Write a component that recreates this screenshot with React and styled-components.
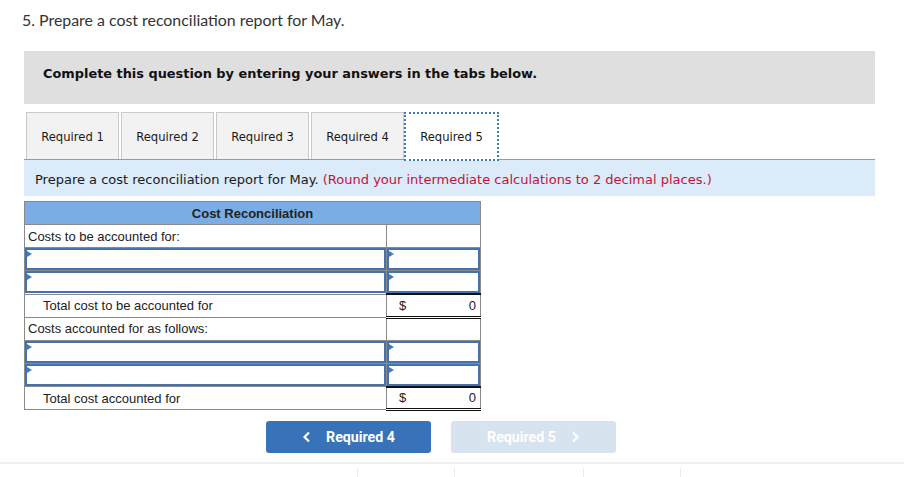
import React from "react";
import styled, { createGlobalStyle } from "styled-components";

const Global = createGlobalStyle`
  html, body { margin: 0; padding: 0; background: #fff; }
  body { width: 904px; height: 477px; overflow: hidden; }
  * { box-sizing: border-box; }
`;

const Page = styled.div`
  position: relative;
  width: 904px;
  height: 477px;
  padding-top: 10px;
`;

const Title = styled.div`
  font-family: Lato, "Open Sans", sans-serif;
  font-size: 15.9px;
  color: #333;
  line-height: 20px;
  padding-left: 22px;
  height: 41px;
`;

const Section = styled.div`
  margin-left: 24px;
  width: 851px;
`;

const Banner = styled.div`
  background: #dfdfdf;
  height: 53px;
  display: flex;
  align-items: center;
  padding: 0 0 8px 19px;
  font-family: "DejaVu Sans", Verdana, sans-serif;
  font-weight: bold;
  font-size: 12.9px;
  color: #111;
`;

const TabList = styled.div`
  display: flex;
  gap: 2px;
  margin-top: 8px;
  padding-left: 2px;
  height: 48px;
  border-bottom: 1px solid #9a9a9a;
`;

const Tab = styled.div`
  width: ${(p) => (p.$active ? "95px" : "93px")};
  height: ${(p) => (p.$active ? "49px" : "47px")};
  margin-left: ${(p) => (p.$active ? "-2px" : "0")};
  display: flex;
  align-items: center;
  justify-content: center;
  font-family: "DejaVu Sans", Verdana, sans-serif;
  font-size: 11.6px;
  color: #1a1a1a;
  background: ${(p) => (p.$active ? "#fff" : "#f2f2f2")};
  border: ${(p) => (p.$active ? "2px dotted #3f78bd" : "1px solid #c9c9c9")};
  border-bottom: ${(p) => (p.$active ? "2px dotted #3f78bd" : "none")};
  padding-top: ${(p) => (p.$active ? "0" : "1px")};
`;

const Instruction = styled.div`
  background: #dbebf9;
  height: 36px;
  display: flex;
  align-items: center;
  padding: 2px 0 0 11px;
  font-family: "DejaVu Sans", Verdana, sans-serif;
  font-size: 13px;
  color: #1a1a1a;
`;

const Red = styled.span`
  color: #c0143c;
`;

const Table = styled.table`
  margin-top: 5px;
  border-collapse: collapse;
  width: 457px;
  font-family: "Liberation Sans", Arial, sans-serif;
  font-size: 13px;
  color: #222;
  border: 1px solid #8a8a8a;
`;

const HeadCell = styled.th`
  background: #7aade4;
  height: 23px;
  font-weight: bold;
  font-size: 13px;
  text-align: center;
  padding: 0;
  border: 1px solid #8a8a8a;
`;

const LabelCell = styled.td`
  height: 23px;
  padding: 0 0 0 ${(p) => (p.$indent ? "18px" : "3px")};
  border: 1px solid #8a8a8a;
  width: 362px;
  vertical-align: middle;
`;

const BlankCell = styled.td`
  border: 1px solid #8a8a8a;
  padding: 0;
  height: 23px;
`;

const InputCell = styled.td`
  padding: 0;
  height: 23px;
  border: 1px solid #8a8a8a;
`;

const InputBox = styled.div`
  position: relative;
  height: 22px;
  border: 2px solid #4672ab;
  background: #fff;
  &::before {
    content: "";
    position: absolute;
    left: 0;
    top: 1px;
    border-left: 5px solid #3f7bc2;
    border-top: 3px solid transparent;
    border-bottom: 3px solid transparent;
  }
`;

const TotalCell = styled.td`
  padding: 0 4px 0 12px;
  height: 23px;
  border: 1px solid #8a8a8a;
  border-top: 2px solid #111;
  border-bottom: 3px double #111;
`;

const Amount = styled.div`
  display: flex;
  justify-content: space-between;
  align-items: center;
`;

const Nav = styled.div`
  display: flex;
  gap: 20px;
  margin-top: 10px;
  padding-left: 266px;
`;

const NavButton = styled.button`
  width: 165px;
  height: 32px;
  border: none;
  border-radius: 3px;
  background: ${(p) => (p.$disabled ? "#d8e3f0" : "#3873b9")};
  color: #fff;
  font-family: Roboto, "Liberation Sans", Arial, sans-serif;
  font-weight: 700;
  font-size: 14.2px;
  display: flex;
  align-items: center;
  justify-content: center;
  gap: 15px;
  padding: 0;
  cursor: ${(p) => (p.$disabled ? "default" : "pointer")};
`;

const Footer = styled.div`
  margin-top: 9px;
  border-top: 2px solid #efefef;
  display: flex;
  height: 16px;
  padding-top: 4px;
`;

const FooterCell = styled.div`
  width: ${(p) => p.$w}px;
  border-left: ${(p) => (p.$first ? "none" : "1px solid #ececec")};
`;

const Chevron = ({ dir }) => (
  <svg width="9" height="12" viewBox="0 0 9 12" aria-hidden="true">
    <path
      d={dir === "left" ? "M7 1.5 L2.5 6 L7 10.5" : "M2 1.5 L6.5 6 L2 10.5"}
      fill="none"
      stroke="#fff"
      strokeWidth="2.2"
    />
  </svg>
);

const InputRow = () => (
  <tr>
    <InputCell>
      <InputBox />
    </InputCell>
    <InputCell>
      <InputBox />
    </InputCell>
  </tr>
);

export default function App() {
  const tabs = ["Required 1", "Required 2", "Required 3", "Required 4", "Required 5"];
  return (
    <Page>
      <Global />
      <Title>5. Prepare a cost reconciliation report for May.</Title>
      <Section>
        <Banner>Complete this question by entering your answers in the tabs below.</Banner>
        <TabList>
          {tabs.map((t, i) => (
            <Tab key={t} $active={i === 4}>
              {t}
            </Tab>
          ))}
        </TabList>
        <Instruction>
          Prepare a cost reconciliation report for May.&nbsp;
          <Red>(Round your intermediate calculations to 2 decimal places.)</Red>
        </Instruction>
        <Table>
          <thead>
            <tr>
              <HeadCell colSpan={2}>Cost Reconciliation</HeadCell>
            </tr>
          </thead>
          <tbody>
            <tr>
              <LabelCell>Costs to be accounted for:</LabelCell>
              <BlankCell />
            </tr>
            <InputRow />
            <InputRow />
            <tr>
              <LabelCell $indent>Total cost to be accounted for</LabelCell>
              <TotalCell>
                <Amount>
                  <span>$</span>
                  <span>0</span>
                </Amount>
              </TotalCell>
            </tr>
            <tr>
              <LabelCell>Costs accounted for as follows:</LabelCell>
              <BlankCell />
            </tr>
            <InputRow />
            <InputRow />
            <tr>
              <LabelCell $indent>Total cost accounted for</LabelCell>
              <TotalCell>
                <Amount>
                  <span>$</span>
                  <span>0</span>
                </Amount>
              </TotalCell>
            </tr>
          </tbody>
        </Table>
      </Section>
      <Nav>
        <NavButton>
          <Chevron dir="left" />
          Required 4
        </NavButton>
        <NavButton $disabled disabled>
          Required 5
          <Chevron dir="right" />
        </NavButton>
      </Nav>
      <Footer>
        <FooterCell $first $w={357} />
        <FooterCell $w={97} />
        <FooterCell $w={129} />
        <FooterCell $w={97} />
        <FooterCell $w={224} />
      </Footer>
    </Page>
  );
}
